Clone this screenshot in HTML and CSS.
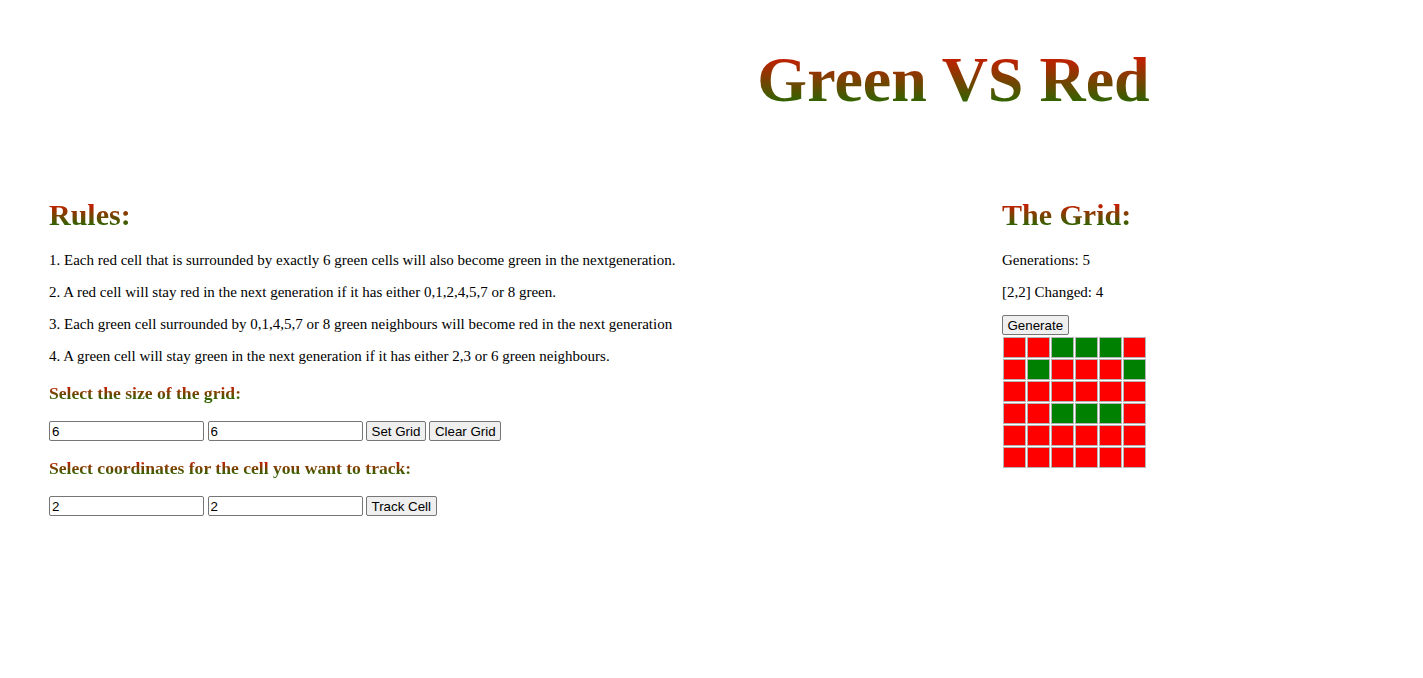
FILE: index.html
```html
<!DOCTYPE html>
<html>
<head>
<meta charset="utf-8">
<title>Green VS Red</title>
<link rel="stylesheet" href="styles.css">
</head>
<body>
<header class="header">
  <h1 class="title gradient">Green VS Red</h1>
</header>
<main class="columns">
  <section class="rules">
    <h2 class="heading gradient">Rules:</h2>
    <p class="text">1. Each red cell that is surrounded by exactly 6 green cells will also become green in the nextgeneration.</p>
    <p class="text">2. A red cell will stay red in the next generation if it has either 0,1,2,4,5,7 or 8 green.</p>
    <p class="text">3. Each green cell surrounded by 0,1,4,5,7 or 8 green neighbours will become red in the next generation</p>
    <p class="text">4. A green cell will stay green in the next generation if it has either 2,3 or 6 green neighbours.</p>
    <h3 class="subheading gradient">Select the size of the grid:</h3>
    <div class="controls">
      <input class="field" type="text" value="6">
      <input class="field" type="text" value="6">
      <button class="btn">Set Grid</button>
      <button class="btn">Clear Grid</button>
    </div>
    <h3 class="subheading gradient">Select coordinates for the cell you want to track:</h3>
    <div class="controls">
      <input class="field" type="text" value="2">
      <input class="field" type="text" value="2">
      <button class="btn">Track Cell</button>
    </div>
  </section>
  <section class="board">
    <h2 class="heading gradient">The Grid:</h2>
    <p class="text">Generations: 5</p>
    <p class="text">[2,2] Changed: 4</p>
    <button class="btn generate">Generate</button>
    <div class="grid">
      <div class="cell red"></div><div class="cell red"></div><div class="cell green"></div><div class="cell green"></div><div class="cell green"></div><div class="cell red"></div>
      <div class="cell red"></div><div class="cell green"></div><div class="cell red"></div><div class="cell red"></div><div class="cell red"></div><div class="cell green"></div>
      <div class="cell red"></div><div class="cell red"></div><div class="cell red"></div><div class="cell red"></div><div class="cell red"></div><div class="cell red"></div>
      <div class="cell red"></div><div class="cell red"></div><div class="cell green"></div><div class="cell green"></div><div class="cell green"></div><div class="cell red"></div>
      <div class="cell red"></div><div class="cell red"></div><div class="cell red"></div><div class="cell red"></div><div class="cell red"></div><div class="cell red"></div>
      <div class="cell red"></div><div class="cell red"></div><div class="cell red"></div><div class="cell red"></div><div class="cell red"></div><div class="cell red"></div>
    </div>
  </section>
</main>
</body>
</html>
```

FILE: styles.css
```css
html, body {
  background: #ffffff;
}
body {
  margin: 0;
  padding: 0 8px;
  font-family: "Liberation Serif", "Times New Roman", serif;
  color: #000;
}
.gradient {
  background: linear-gradient(to bottom, #c41e00 20%, #2f6400 80%);
  -webkit-background-clip: text;
  background-clip: text;
  color: transparent;
  -webkit-text-fill-color: transparent;
}
.header {
  padding-left: 484px;
  text-align: center;
}
.title {
  display: inline-block;
  margin: 43px 0 0;
  font-size: 64px;
  line-height: 74px;
  font-weight: bold;
}
.columns {
  display: grid;
  grid-template-columns: 953px 1fr;
  padding-left: 41px;
  margin-top: 81px;
}
.heading {
  margin: 0 0 20px;
  font-size: 30px;
  line-height: 34px;
  font-weight: bold;
  display: inline-block;
}
.rules, .board {
  display: flex;
  flex-direction: column;
  align-items: flex-start;
}
.text {
  margin: 0 0 15px;
  font-size: 15px;
  line-height: 17px;
}
.subheading {
  margin: 3px 0 0;
  font-size: 17.6px;
  line-height: 20px;
  font-weight: bold;
}
.controls {
  display: flex;
  gap: 3.5px;
  margin: 18px 0 14px;
}
.field {
  width: 155px;
  height: 20px;
  box-sizing: border-box;
  margin: 0;
  padding: 1px 2px;
  border: 1px solid #767676;
  border-radius: 2px;
  font-family: Arial, "Liberation Sans", sans-serif;
  font-size: 13.33px;
  color: #000;
}
.btn {
  height: 20px;
  box-sizing: border-box;
  margin: 0;
  padding: 1px 4.5px;
  border: 1px solid #767676;
  border-radius: 2px;
  background: #efefef;
  font-family: Arial, "Liberation Sans", sans-serif;
  font-size: 13.33px;
  color: #000;
}
.generate {
  margin-top: -1px;
}
.grid {
  display: grid;
  grid-template-columns: repeat(6, 23px);
  grid-auto-rows: 21px;
  gap: 1px;
  margin-top: 2px;
  margin-left: 1px;
}
.cell {
  box-sizing: border-box;
  border: 1px solid #b4b4b4;
}
.red {
  background: #ff0000;
}
.green {
  background: #008000;
}
```
